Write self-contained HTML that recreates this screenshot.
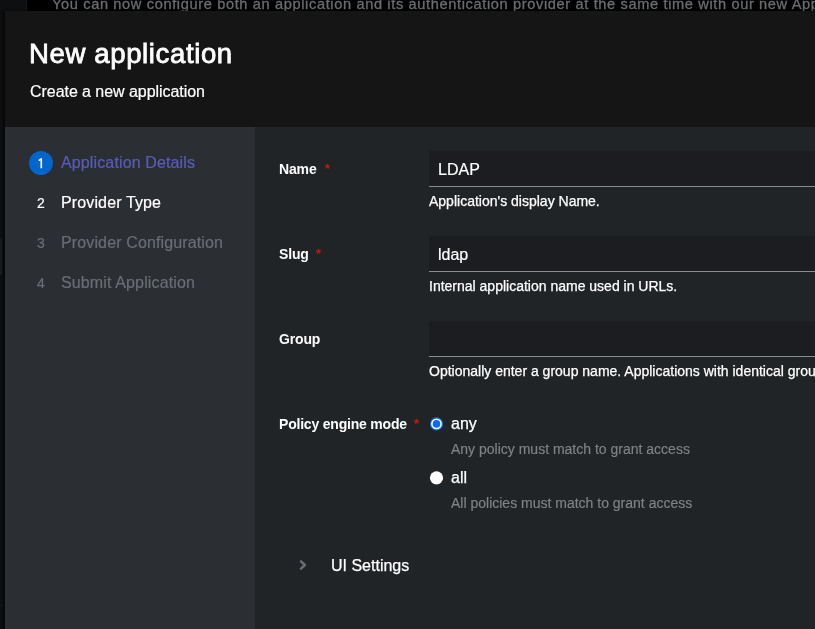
<!DOCTYPE html>
<html><head><meta charset="utf-8">
<style>
*{box-sizing:border-box;margin:0;padding:0}
html,body{width:815px;height:629px;overflow:hidden;background:#000;font-family:"Liberation Sans",sans-serif;position:relative}
.a,.num,.req{will-change:transform}
.a{position:absolute;white-space:nowrap;line-height:1}
.bgleft{position:absolute;left:0;top:0;width:27px;height:629px;background:#0e0f10}
.bgline{position:absolute;left:26px;top:0;width:1px;height:11px;background:#15171a}
.bgrect{position:absolute;left:0;top:238px;width:2px;height:37px;background:#1a1b1d}
.banner{left:51.5px;top:-3.3px;color:#6b6d70;font-size:14.6px;letter-spacing:0.635px;-webkit-text-stroke:0.3px #6b6d70}
.modal{position:absolute;left:5px;top:11px;width:830px;height:640px;background:#151515;box-shadow:-2px 0 3px rgba(0,0,0,.6)}
.nav{position:absolute;left:5px;top:127px;width:250px;height:510px;background:#2b2e33}
.main{position:absolute;left:255px;top:127px;width:600px;height:510px;background:#212427}
.title{left:28.9px;top:40.1px;color:#fff;font-size:27.6px;letter-spacing:0.6px;-webkit-text-stroke:0.8px #fff}
.desc{left:29.5px;top:83.5px;color:#fff;font-size:16px;letter-spacing:-0.05px;-webkit-text-stroke:0.2px #fff}
.num{-webkit-text-stroke:0.2px currentColor;position:absolute;left:29px;width:24px;height:24px;line-height:24px;text-align:center;font-size:14px;white-space:nowrap}
.s1{background:#0066cc;border-radius:50%;color:#fff}
.st{left:60.6px;font-size:16px;letter-spacing:0.13px;-webkit-text-stroke:0.2px currentColor}
.lbl{left:279px;color:#fff;font-size:14px;font-weight:bold;letter-spacing:-0.15px}
.req{position:absolute;color:#c9190b;font-size:13px;font-weight:bold;line-height:1}
.inp{position:absolute;left:429px;width:400px;height:36px;background:#1b1d21;border-bottom:1px solid #8a8d90}
.itx{left:438px;color:#fff;font-size:16px;-webkit-text-stroke:0.2px #fff}
.help{left:429px;color:#fff;font-size:14px;-webkit-text-stroke:0.25px #fff}
.radio{position:absolute;left:430px;width:13px;height:13px;border-radius:50%}
.r1{background:#0066cc;border:1.5px solid #0066cc;box-shadow:inset 0 0 0 1.5px #fff}
.r2{background:#fff}
.rl{left:451px;color:#fff;font-size:16px;-webkit-text-stroke:0.25px #fff}
.rd{left:451px;color:#808386;font-size:14px;-webkit-text-stroke:0.15px #808386}
.ui{left:331px;color:#fff;font-size:16px;-webkit-text-stroke:0.25px #fff}
.chev{position:absolute;left:298px;top:558px}
</style></head><body>
<div class="bgleft"></div><div class="bgline"></div><div class="bgrect"></div><div style="position:absolute;left:0;top:605px;width:2px;height:1px;background:#1a1b1d"></div>
<div class="a banner">You can now configure both an application and its authentication provider at the same time with our new Application Wizard.</div>
<div class="modal"></div>
<div class="nav"></div>
<div class="main"></div>

<div class="a title">New application</div>
<div class="a desc">Create a new application</div>

<div class="num s1" style="top:151px"></div><svg style="position:absolute;left:29px;top:151px" width="24" height="24" viewBox="29 151 24 24"><path d="M41.3 168.3 V158.8 L38.8 160.6" stroke="#fff" stroke-width="1.6" fill="none" stroke-linejoin="round"/></svg>
<div class="a st" style="top:155.4px;color:#5a5cb9">Application Details</div>
<div class="num" style="top:191px;color:#fff">2</div>
<div class="a st" style="top:194.9px;color:#fff">Provider Type</div>
<div class="num" style="top:231px;color:#6a6e73">3</div>
<div class="a st" style="top:234.9px;color:#6a6e73">Provider Configuration</div>
<div class="num" style="top:271px;color:#6a6e73">4</div>
<div class="a st" style="top:274.9px;color:#6a6e73">Submit Application</div>

<div class="a lbl" style="top:162.2px">Name</div><div class="req" style="left:325.2px;top:162px">*</div>
<div class="inp" style="top:151px"></div>
<div class="a itx" style="top:161.5px">LDAP</div>
<div class="a help" style="top:194.2px">Application's display Name.</div>

<div class="a lbl" style="top:247.2px">Slug</div><div class="req" style="left:316.3px;top:247px">*</div>
<div class="inp" style="top:236px"></div>
<div class="a itx" style="top:246.5px">ldap</div>
<div class="a help" style="top:279.2px">Internal application name used in URLs.</div>

<div class="a lbl" style="top:332.2px">Group</div>
<div class="inp" style="top:321px"></div>
<div class="a help" style="top:364.2px">Optionally enter a group name. Applications with identical group names are shown grouped together.</div>

<div class="a lbl" style="top:417.2px;letter-spacing:-0.2px">Policy engine mode</div><div class="req" style="left:413.8px;top:417px">*</div>
<svg style="position:absolute;left:420px;top:414px" width="34" height="20" viewBox="420 414 34 20"><circle cx="436.5" cy="423.9" r="6.6" fill="#0a6cf5"/><circle cx="436.5" cy="423.9" r="5.4" fill="#fff"/><circle cx="436.5" cy="423.9" r="3.8" fill="#0a6cf5"/></svg>
<div class="a rl" style="top:416.4px">any</div>
<div class="a rd" style="top:442.2px">Any policy must match to grant access</div>
<svg style="position:absolute;left:420px;top:468px" width="34" height="20" viewBox="420 468 34 20"><circle cx="436.5" cy="477.8" r="6.6" fill="#fff"/></svg>
<div class="a rl" style="top:470.2px">all</div>
<div class="a rd" style="top:496px">All policies must match to grant access</div>

<svg class="chev" width="12" height="14" viewBox="0 0 12 14"><path d="M3 3.3 L6.9 7 L3 10.7" stroke="#6a6e73" stroke-width="2.5" stroke-linecap="round" stroke-linejoin="round" fill="none"/></svg>
<div class="a ui" style="top:557.7px">UI Settings</div>
</body></html>
